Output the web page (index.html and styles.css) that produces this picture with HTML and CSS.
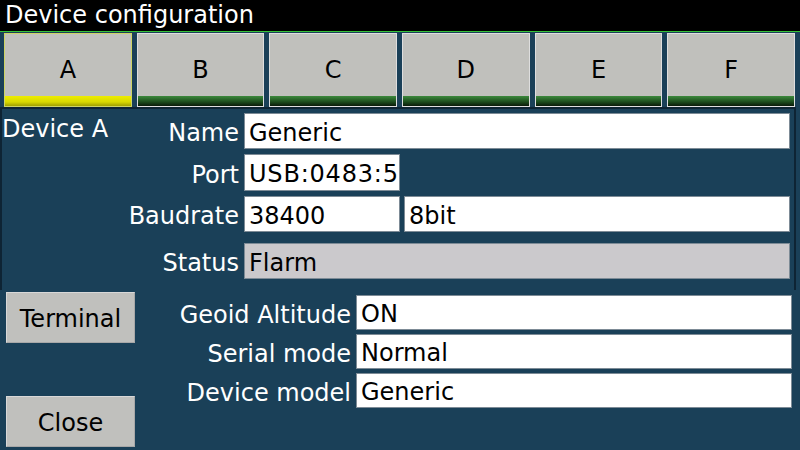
FILE: index.html
```html
<!DOCTYPE html>
<html>
<head>
<meta charset="utf-8">
<link rel="stylesheet" href="styles.css">
</head>
<body>
<div class="screen">
  <div class="title">Device configuration</div>
  <div class="tabs">
    <div class="tab active"><span class="tab-label">A</span><span class="stripe"></span></div>
    <div class="tab"><span class="tab-label">B</span><span class="stripe"></span></div>
    <div class="tab"><span class="tab-label">C</span><span class="stripe"></span></div>
    <div class="tab"><span class="tab-label">D</span><span class="stripe"></span></div>
    <div class="tab"><span class="tab-label">E</span><span class="stripe"></span></div>
    <div class="tab"><span class="tab-label">F</span><span class="stripe"></span></div>
  </div>
  <div class="panel">
    <div class="label first"><span class="device">Device A</span><span>Name</span></div>
    <div class="field">Generic</div>
    <div class="label">Port</div>
    <div class="fieldrow"><div class="field port wide-text">USB:0483:5740</div></div>
    <div class="label">Baudrate</div>
    <div class="fieldrow"><div class="field port">38400</div><div class="field grow">8bit</div></div>
    <div class="label status">Status</div>
    <div class="field readonly status">Flarm</div>
  </div>
  <div class="bottom">
    <div class="buttons">
      <div class="button">Terminal</div>
      <div class="button">Close</div>
    </div>
    <div class="options">
      <div class="label">Geoid Altitude</div>
      <div class="field small">ON</div>
      <div class="label">Serial mode</div>
      <div class="field small">Normal</div>
      <div class="label">Device model</div>
      <div class="field small">Generic</div>
    </div>
  </div>
</div>
</body>
</html>
```
FILE: styles.css
```css
* { box-sizing: border-box; }
html, body {
  margin: 0;
  padding: 0;
  width: 800px;
  height: 450px;
  overflow: hidden;
  background: #1a4058;
  font-family: "DejaVu Sans", sans-serif;
}
.screen {
  width: 800px;
  height: 450px;
  display: flex;
  flex-direction: column;
}
.title {
  height: 32px;
  background: #000;
  color: #fff;
  font-size: 24px;
  line-height: 30px;
  padding-left: 5px;
  border-bottom: 1px solid #36c236;
}
.tabs {
  display: flex;
  gap: 5px;
  padding: 1px 5px 0 4px;
  height: 75px;
}
.tab {
  flex: 1;
  height: 74px;
  background: #c0c0bc;
  border: 1px solid #dedede;
  display: flex;
  flex-direction: column;
}
.tab.active { border-color: #cdd464; }
.tab-label {
  flex: 1;
  display: flex;
  align-items: center;
  justify-content: center;
  font-size: 24px;
  color: #000;
  padding-top: 10px;
}
.stripe {
  height: 10px;
  background: linear-gradient(#3c8a3c, #1c4a1c 60%, #0a1a0a);
}
.tab.active .stripe {
  background: linear-gradient(#eded00, #d8d800 60%, #a0a000);
}
.panel {
  width: 796px;
  height: 183px;
  border: 2px solid #0e2434;
  border-bottom: none;
  padding: 4px 4px 0 0;
  display: grid;
  grid-template-columns: 237px 1fr;
  grid-template-rows: 36px 37px 36px 42px;
  column-gap: 5px;
  row-gap: 5px;
}
.label {
  color: #fff;
  font-size: 24px;
  text-align: right;
  display: flex;
  align-items: center;
  justify-content: flex-end;
  padding-top: 4px;
}
.label.first { justify-content: space-between; padding-left: 0; }
.device { align-self: flex-start; margin-top: -2px; }
.status { align-self: end; height: 36px; }
.field {
  background: #fff;
  border: 1px solid #7d8b96;
  font-size: 24px;
  color: #000;
  padding: 3px 0 0 4px;
  display: flex;
  align-items: center;
  white-space: nowrap;
  overflow: hidden;
}
.field.readonly { background: #cbc9cc; }
.fieldrow {
  display: flex;
  gap: 4px;
}
.field.port { width: 156px; }
.field.wide-text { letter-spacing: 0.8px; }
.field.grow { flex: 1; }
.bottom {
  flex: 1;
  display: flex;
  padding: 2px 8px 3px 6px;
}
.buttons {
  width: 129px;
  display: flex;
  flex-direction: column;
  justify-content: space-between;
}
.button {
  height: 51px;
  background: #c0c0bd;
  border: 1px solid #d8d8d8;
  border-right-color: #a8a8a8;
  border-bottom-color: #a8a8a8;
  font-size: 24px;
  color: #000;
  display: flex;
  align-items: center;
  justify-content: center;
  padding-top: 2px;
}
.options {
  flex: 1;
  display: grid;
  grid-template-columns: 1fr 436px;
  grid-template-rows: 35px 35px 35px;
  column-gap: 5px;
  row-gap: 4px;
  align-content: start;
  margin-top: 3px;
}
.field.small { padding-top: 2px; }
```
